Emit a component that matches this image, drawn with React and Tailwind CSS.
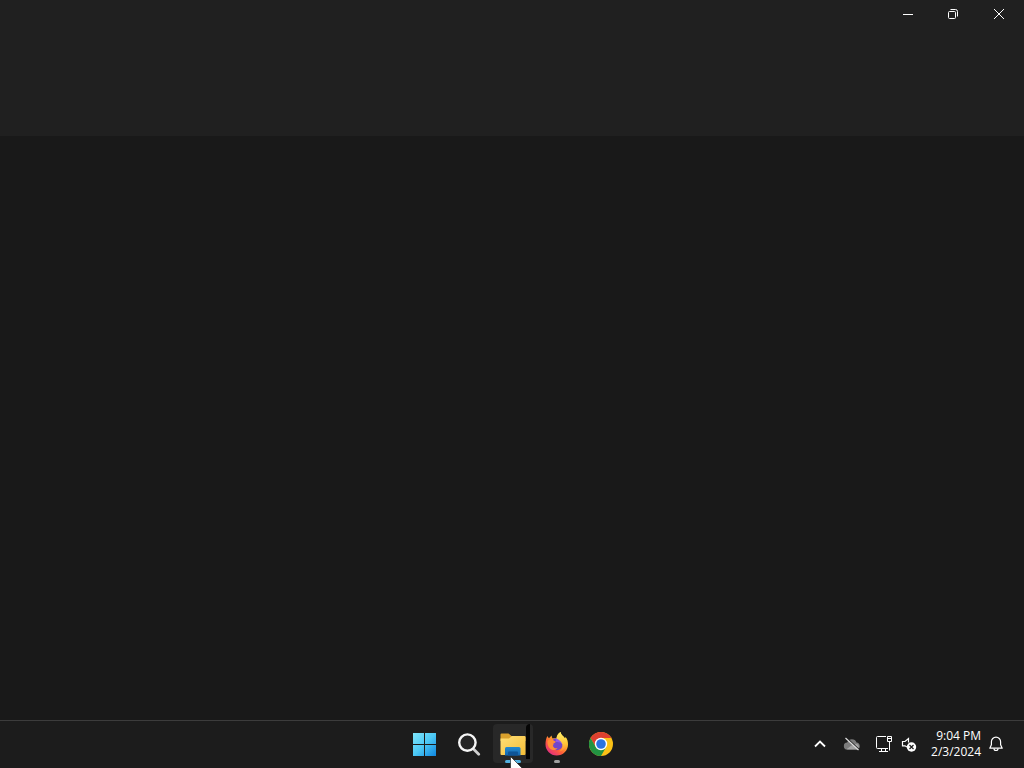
import React from "react";

function WindowsLogo() {
    return (
        <svg viewBox="0 0 24 24" className="w-6 h-6" aria-hidden="true">
            <defs>
                <linearGradient id="win" x1="0" y1="1" x2="23" y2="24" gradientUnits="userSpaceOnUse">
                    <stop offset="0" stopColor="#7fe6fb" />
                    <stop offset="0.5" stopColor="#4cc8f5" />
                    <stop offset="1" stopColor="#0f86e0" />
                </linearGradient>
            </defs>
            <path fill="url(#win)" d="M0 1h11v11H0zM12 1h11v11H12zM0 13h11v11H0zM12 13h11v11H12z" />
        </svg>
    );
}

function SearchIcon() {
    return (
        <svg viewBox="0 0 24 24" className="w-6 h-6" fill="none" aria-hidden="true">
            <path d="M17 17.500l4.700 4.700" stroke="#cfcfcf" strokeWidth="2.800" strokeLinecap="round" />
            <circle cx="10.400" cy="10.600" r="8.200" fill="#262626" stroke="#f6f6f6" strokeWidth="2.400" />
        </svg>
    );
}

function FolderIcon() {
    return (
        <svg viewBox="0 0 26 24" className="w-[26px] h-6" aria-hidden="true">
            <defs>
                <linearGradient id="folder" x1="0" y1="0" x2="1" y2="1">
                    <stop offset="0" stopColor="#ffdf78" />
                    <stop offset="1" stopColor="#f5bd36" />
                </linearGradient>
                <linearGradient id="pocket" x1="0" y1="0" x2="0" y2="1">
                    <stop offset="0" stopColor="#2389cf" />
                    <stop offset="1" stopColor="#1466ad" />
                </linearGradient>
            </defs>
            <path fill="#d9a02c" d="M1.500 1.500h7l3 2.500H24q1.500 0 1.500 1.500V9H.5V2.500q0-1 1-1z" />
            <path fill="url(#folder)" d="M.5 6.500h8.500l3-2.500h12.500q1 0 1 1v17q0 1-1 1h-23q-1 0-1-1z" />
            <path fill="url(#pocket)" d="M5 23.500v-7q0-1.500 1.500-1.500h12.500q1.500 0 1.500 1.500v7z" />
            <path fill="#0f5597" d="M9 19.500h8q1 0 1 1v3H8v-3q0-1 1-1z" />
        </svg>
    );
}

function FirefoxIcon() {
    return (
        <svg viewBox="0 0 24 24" className="w-6 h-6" aria-hidden="true">
            <defs>
                <linearGradient id="fox" x1="20" y1="2" x2="4" y2="22" gradientUnits="userSpaceOnUse">
                    <stop offset="0" stopColor="#fff04a" />
                    <stop offset="0.35" stopColor="#ffb02c" />
                    <stop offset="0.65" stopColor="#ff5f38" />
                    <stop offset="1" stopColor="#e02a86" />
                </linearGradient>
                <linearGradient id="tail" x1="18" y1="0" x2="18" y2="20" gradientUnits="userSpaceOnUse">
                    <stop offset="0" stopColor="#fff06a" />
                    <stop offset="0.6" stopColor="#ffc437" />
                    <stop offset="1" stopColor="#ff7f3a" />
                </linearGradient>
            </defs>
            <path
                fill="url(#fox)"
                d="M2.500 4c.3 1 .8 1.700 1.500 2.200C4.800 5 5.800 4 6.800 3.400c-.2 1.200.2 2.200.9 3 1.200-.3 2.600-.3 3.800.1.300-2.600 1.300-4.900 4-6.500.5 2.300 1.700 3.500 3.200 4.700l.9 1.600c.8-.3.900-1.100.7-1.600 2.300 2.200 2.700 5 2.700 7.800C23 18.600 18 23.500 11.700 23.500S.5 18.500.5 12.500C.5 9.300 1 6.300 2.500 4z"
            />
            <circle cx="11.700" cy="12.200" r="6" fill="#7246c8" />
            <path fill="#9059e6" d="M10.500 6.500c4 0 6.800 2.500 7 6-1.600-2-4-2.800-6.500-2.400z" />
            <path
                fill="url(#tail)"
                d="M15.500 0c.5 2.300 1.700 3.500 3.200 4.700C21 7 21.800 9.300 21.400 12c-.4 4-3.500 7-7.400 7.500 2.600-1.800 4.200-4.300 3.500-6.800-.6-2.500-2.700-4.500-6-6.200C11.500 4.500 12.900 1.900 15.500 0z"
            />
            <path
                fill="#ff8f35"
                d="M2.500 9c1.700-1.700 3.600-2 5.400-1.300.6.900 1.500 1.500 3 1.700-.3 1.200-1.600 1.500-2.500 2.200.1 1 .1 1.500-.6 2.100.7 2.100 2.700 3 5 2.400-1.700 2.400-5.300 2.700-7.600.6C3 15 2.300 12 2.500 9z"
            />
        </svg>
    );
}

function ChromeIcon() {
    return (
        <svg viewBox="0 0 24 24" className="w-6 h-6" aria-hidden="true">
            <circle cx="12" cy="12" r="12" fill="#fbc116" />
            <path fill="#dd4030" d="M1.600 6A12 12 0 0 1 22.400 6H12L6.800 15z" />
            <path fill="#229342" d="M1.600 6A12 12 0 0 0 12 24l5.200-9L12 12l-5.200 3z" />
            <circle cx="12" cy="12" r="6.200" fill="#fff" />
            <circle cx="12" cy="12" r="4.800" fill="#2a72e0" />
        </svg>
    );
}

function CloudOffIcon() {
    return (
        <svg viewBox="0 0 18 16" className="w-[18px] h-4" aria-hidden="true">
            <path fill="#7c7c7c" d="M4.500 13.500a3.500 3.500 0 0 1-.3-7A5 5 0 0 1 13.500 6.500a3.600 3.600 0 0 1 .8 7z" />
            <path fill="#a4a4a4" d="M3.500 13.300l4.500-3.600 5.500-1.700a3 3 0 0 1 .8 5.500H4.500z" />
            <path d="M3.500 2l13 12" stroke="#1c1c1c" strokeWidth="1.500" />
            <path d="M2.500 2l13 12" stroke="#e0e0e0" strokeWidth="1.200" />
        </svg>
    );
}

function NetworkIcon() {
    return (
        <svg viewBox="0 0 16 16" className="w-4 h-4" fill="none" stroke="#fff" aria-hidden="true">
            <path d="M10 .5H1.500q-1 0-1 1v10q0 1 1 1H12M5.500 12.500v3M9.500 12.500v3M3 15.500h9" />
            <path d="M11.500.5h4v5h-4zM11.500 2.500h4M13.500 5.500v9" />
        </svg>
    );
}

function MutedIcon() {
    return (
        <svg viewBox="0 0 16 16" className="w-4 h-4" fill="none" aria-hidden="true">
            <path d="M6 11L4 9.800H1.500V5.500h2.500L7.500 2.500v4" stroke="#fff" strokeWidth="1.200" />
            <circle cx="10.500" cy="11" r="4.700" fill="#fff" />
            <path d="M8.500 9l4 4M12.500 9l-4 4" stroke="#1c1c1c" strokeWidth="1.200" />
        </svg>
    );
}

function BellIcon() {
    return (
        <svg viewBox="0 0 16 16" className="w-4 h-4" fill="none" stroke="#fff" strokeWidth="1.200" strokeLinejoin="round" aria-hidden="true">
            <path d="M8 1.200a4.600 4.600 0 0 0-4.600 4.600v3L1.800 12.200h12.400l-1.600-3.400v-3A4.600 4.600 0 0 0 8 1.200z" />
            <path d="M6 12.500a2 2 0 0 0 4 0" />
        </svg>
    );
}

function Cursor() {
    return (
        <svg viewBox="0 0 14 19" className="absolute left-[19px] top-[35px] w-3.5 h-[19px] pointer-events-none" aria-hidden="true">
            <path fill="#fff" stroke="#111" strokeWidth="0.600" d="M.5.500v17l4-3.800 2.400 5 2.500-1-2.300-5.200h5.400z" />
        </svg>
    );
}

const captionButton = "w-[46px] h-7 flex items-center justify-center hover:bg-[#2d2d2d]";

function TitleBar() {
    return (
        <header className="h-[136px] shrink-0 bg-[#202020] flex items-start justify-end pr-0.5">
            <button type="button" aria-label="Minimize" className={captionButton}>
                <svg viewBox="0 0 12 12" className="w-3 h-3" stroke="#fff">
                    <path d="M2 6.500h10" />
                </svg>
            </button>
            <button type="button" aria-label="Restore" className={captionButton}>
                <svg viewBox="0 0 12 12" className="w-3 h-3" fill="none" stroke="#fff">
                    <rect x="1.500" y="3.500" width="7" height="7" rx="1" />
                    <path d="M3.500 1.500H8.500q2 0 2 2v5" />
                </svg>
            </button>
            <button type="button" aria-label="Close" className={captionButton}>
                <svg viewBox="0 0 12 12" className="w-3 h-3" stroke="#fff">
                    <path d="M1 1l10 10M11 1L1 11" />
                </svg>
            </button>
        </header>
    );
}

const apps = [
    { name: "Start", icon: WindowsLogo },
    { name: "Search", icon: SearchIcon },
    { name: "File Explorer", icon: FolderIcon, active: true },
    { name: "Firefox", icon: FirefoxIcon, running: true },
    { name: "Chrome", icon: ChromeIcon },
];

function AppButton({ app }) {
    const Icon = app.icon;

    return (
        <button type="button" aria-label={app.name} className="relative w-11 h-[46px] flex items-center justify-center">
            {app.active && (
                <span className="absolute left-0.5 right-0.5 top-[3px] bottom-1 rounded bg-[#282828]">
                    <span className="absolute right-[3px] top-0 bottom-1 w-1 rounded-tl bg-[#050505]" />
                </span>
            )}
            <span className="relative">
                <Icon />
            </span>
            {app.active && <span className="absolute left-3.5 bottom-1 w-4 h-[3px] rounded-full bg-[#52b0e0]" />}
            {app.running && <span className="absolute left-[19px] bottom-1 w-1.5 h-[3px] rounded-full bg-[#a0a0a0]" />}
            {app.active && <Cursor />}
        </button>
    );
}

function Taskbar() {
    return (
        <footer className="h-12 shrink-0 bg-[#1c1c1c] border-t border-[#3c3c3c] grid grid-cols-[1fr_auto_1fr] items-start overflow-hidden">
            <div />
            <nav aria-label="Apps" className="flex pl-0.5">
                {apps.map((app) => (
                    <AppButton key={app.name} app={app} />
                ))}
            </nav>
            <div className="h-[46px] flex items-center justify-end pr-[13px] text-white">
                <button type="button" aria-label="Show hidden icons" className="w-8 h-10 flex items-center justify-center">
                    <svg viewBox="0 0 12 12" className="w-3 h-3" fill="none" stroke="#fff" strokeWidth="1.800">
                        <path d="M1 8.500L6 3.500l5 5" />
                    </svg>
                </button>
                <button type="button" aria-label="OneDrive" className="w-8 h-10 flex items-center justify-center">
                    <CloudOffIcon />
                </button>
                <button type="button" aria-label="Network" className="w-8 h-10 flex items-center justify-center">
                    <NetworkIcon />
                </button>
                <button type="button" aria-label="Volume" className="w-[18px] h-10 flex items-center justify-center">
                    <MutedIcon />
                </button>
                <button type="button" className="w-[63px] h-10 flex flex-col items-end justify-center text-[12px] leading-4 whitespace-nowrap">
                    <span>9:04 PM</span>
                    <span>2/3/2024</span>
                </button>
                <button type="button" aria-label="Notifications" className="w-[30px] h-10 flex items-center justify-center">
                    <BellIcon />
                </button>
            </div>
        </footer>
    );
}

export default function App() {
    return (
        <div className="h-screen flex flex-col bg-[#191919] font-['Open_Sans','Noto_Sans',sans-serif]">
            <TitleBar />
            <main className="flex-1 bg-[#191919]" />
            <Taskbar />
        </div>
    );
}
